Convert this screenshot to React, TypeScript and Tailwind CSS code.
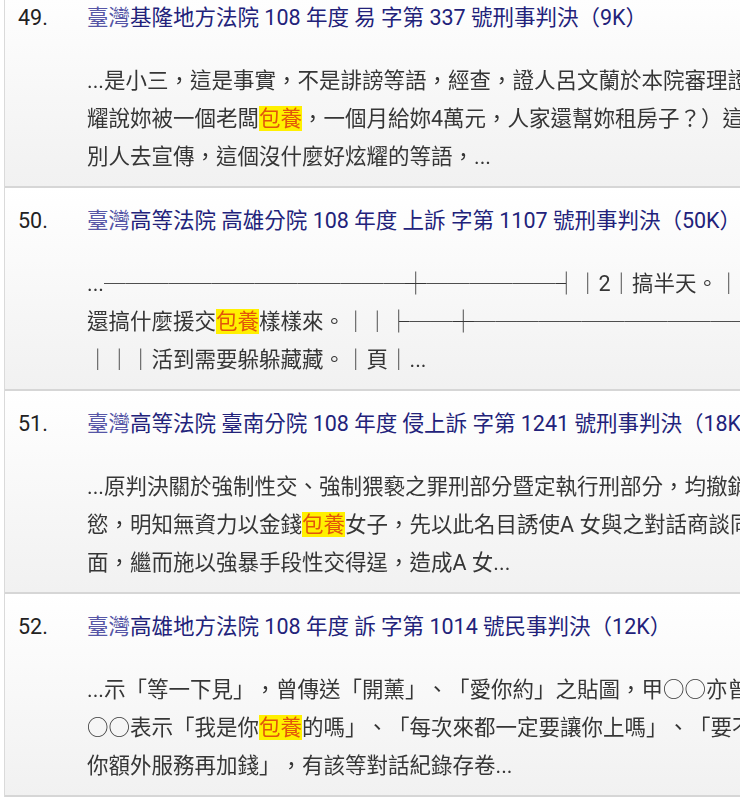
import React from 'react';

type Item = {
  no: string;
  court: string;
  rest: string;
  lines: string[];
};

const KEY = '包養';

const items: Item[] = [
  {
    no: '49.',
    court: '基隆地方法院',
    rest: ' 108 年度 易 字第 337 號刑事判決（9K）',
    lines: [
      '...是小三，這是事實，不是誹謗等語，經查，證人呂文蘭於本院審理證述',
      '耀說妳被一個老闆包養，一個月給妳4萬元，人家還幫妳租房子？）這樣',
      '別人去宣傳，這個沒什麼好炫耀的等語，...',
    ],
  },
  {
    no: '50.',
    court: '高等法院 高雄分院',
    rest: ' 108 年度 上訴 字第 1107 號刑事判決（50K）',
    lines: [
      '...──────────────┼──────┤│2│搞半天。│',
      '還搞什麼援交包養樣樣來。││├──┼──────────────',
      '│││活到需要躲躲藏藏。│頁│...',
    ],
  },
  {
    no: '51.',
    court: '高等法院 臺南分院',
    rest: ' 108 年度 侵上訴 字第 1241 號刑事判決（18K）',
    lines: [
      '...原判決關於強制性交、強制猥褻之罪刑部分暨定執行刑部分，均撤銷',
      '慾，明知無資力以金錢包養女子，先以此名目誘使A 女與之對話商談同意',
      '面，繼而施以強暴手段性交得逞，造成A 女...',
    ],
  },
  {
    no: '52.',
    court: '高雄地方法院',
    rest: ' 108 年度 訴 字第 1014 號民事判決（12K）',
    lines: [
      '...示「等一下見」，曾傳送「開薰」、「愛你約」之貼圖，甲○○亦曾',
      '○○表示「我是你包養的嗎」、「每次來都一定要讓你上嗎」、「要不要',
      '你額外服務再加錢」，有該等對話紀錄存卷...',
    ],
  },
];

function Snippet({ text }: { text: string }) {
  const parts = text.split(KEY);
  return (
    <>
      {parts.map((p, i) => (
        <React.Fragment key={i}>
          {p}
          {i < parts.length - 1 && (
            <span className="bg-[#fff000] text-[#e2560a]">{KEY}</span>
          )}
        </React.Fragment>
      ))}
    </>
  );
}

export default function App() {
  return (
    <div
      className="w-[740px] h-[799px] overflow-hidden bg-white text-[21.5px] [text-spacing-trim:space-all]"
      style={{ fontFamily: 'Roboto, "Noto Sans CJK TC", sans-serif' }}
    >
      <div className="ml-[4px] -mt-[15px] w-[900px] border-l border-[#dadada]">
        {items.map((it) => (
          <div
            key={it.no}
            className="flex h-[203px] bg-linear-to-b from-white to-[#f1f1f1] border-b-2 border-[#d6d6d6] pt-[19px] pl-[13px]"
          >
            <div className="w-[69px] shrink-0 leading-[28px] text-[#222]">{it.no}</div>
            <div className="flex flex-col">
              <div className="leading-[28px] whitespace-nowrap text-[#22227a]">
                <span className="text-[#5656a6]">臺灣</span>
                {it.court}
                {it.rest}
              </div>
              {/* own layer so the thin table lines get plain grey antialiasing */}
              <div className="mt-[30px] text-[#363636] will-change-transform">
                {it.lines.map((l, i) => (
                  <div key={i} className="leading-[38px] whitespace-nowrap">
                    <Snippet text={l} />
                  </div>
                ))}
              </div>
            </div>
          </div>
        ))}
      </div>
    </div>
  );
}
